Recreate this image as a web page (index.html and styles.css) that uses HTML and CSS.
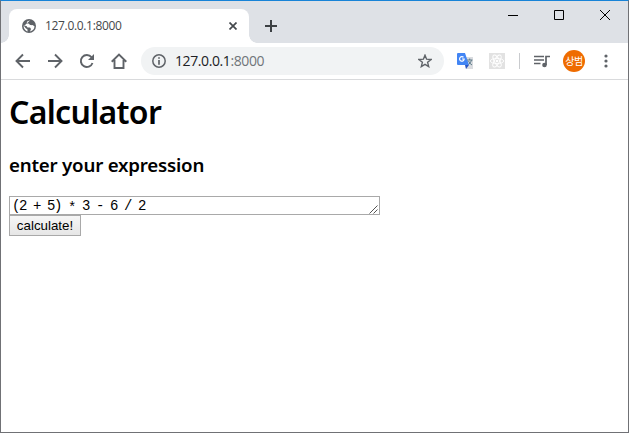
FILE: index.html
```html
<!DOCTYPE html>
<html lang="ko">
<head>
<meta charset="utf-8">
<title>127.0.0.1:8000</title>
<link rel="stylesheet" href="styles.css">
</head>
<body>
<div class="window">
  <header class="tabstrip">
    <div class="tab">
      <svg class="globe" width="14" height="14" viewBox="0 0 14 14"><circle cx="7" cy="7" r="7" fill="#5f6368"/><path d="M8 1.500C5 2 4.500 3 5 4.200L7 4.700 8 6l2-.2 2.500 1.500C12.500 10 10.500 12 8 12.500L9 10 8 8.500H5.500L4.500 7 1.700 6.500C1.300 9.800 4 12 5.500 12.400V10.500L3.500 9 2 7" fill="#fff"/><path d="M8 2.500 11 3l1 2.500-2.500.8L8 5z" fill="#5f6368"/></svg>
      <span class="tab-title">127.0.0.1:8000</span>
      <svg class="tab-close" width="8" height="8" viewBox="0 0 8 8"><path d="M.5.5l7 7M7.500.5l-7 7" stroke="#45494d" stroke-width="1.700"/></svg>
    </div>
    <svg class="new-tab" width="12" height="12" viewBox="0 0 12 12"><path d="M6 0v12M0 6h12" stroke="#3c4043" stroke-width="2"/></svg>
    <div class="controls">
      <svg width="10" height="10" viewBox="0 0 10 10"><path d="M0 5.500h10" stroke="#000"/></svg>
      <svg width="10" height="10" viewBox="0 0 10 10"><path d="M.5.5h9v9h-9z" stroke="#000" fill="none"/></svg>
      <svg width="10" height="10" viewBox="0 0 10 10"><path d="M0 0l10 10M10 0L0 10" stroke="#000"/></svg>
    </div>
  </header>
  <nav class="toolbar">
    <div class="nav-icons">
      <svg width="16" height="16" viewBox="0 0 16 16"><path d="M15 8H2M8 1.500L1.500 8 8 14.500"/></svg>
      <svg width="16" height="16" viewBox="0 0 16 16"><path d="M1 8h13M8 1.500L14.500 8 8 14.500"/></svg>
      <svg width="16" height="16" viewBox="0 0 16 16"><path d="M13.500 10A6 6 0 1 1 12.500 4.200"/><path class="solid" d="M15 1v6H9z"/></svg>
      <svg width="16" height="16" viewBox="0 0 16 16"><path d="M.7 8.700L8 1.500l7.300 7.200M3.500 7v8h9V7"/></svg>
    </div>
    <div class="omnibox">
      <svg width="14" height="14" viewBox="0 0 14 14"><circle cx="7" cy="7" r="6.200" fill="none" stroke="#5f6368" stroke-width="1.500"/><path d="M7 3.200v1.600M7 6v4.800" stroke="#5f6368" stroke-width="1.700"/></svg>
      <span class="url">127.0.0.1<span class="port">:8000</span></span>
      <svg class="star" width="14" height="14" viewBox="0 0 14 14"><path d="M7 1.200l1.600 4 4.500.3-3.500 2.800 1.100 4.300L7 10.300l-3.700 2.300 1.100-4.300L.9 5.500l4.500-.3z" fill="none" stroke="#5f6368" stroke-width="1.400"/></svg>
    </div>
    <svg class="translate" width="16" height="16" viewBox="0 0 16 16"><path d="M7 4h9v12H9z" fill="#dadce0"/><path d="M0 1q0-1 1-1h7l4 12H1q-1 0-1-1z" fill="#4285f4"/><path d="M8 12h4l-3 4z" fill="#2855c5"/><path d="M6.500 4.200A2.300 2.300 0 1 0 7.200 6H5" stroke="#fff" stroke-width="1.200" fill="none"/><path d="M10 7h5.500M12.700 5.500V7M14.500 7q-.5 3-3 4.500M11.500 8q1 2.500 3.500 4" stroke="#607d8b" fill="none"/></svg>
    <svg class="react" width="16" height="16" viewBox="0 0 16 16"><path d="M0 0h16v16H0z" fill="#e2e2e2"/><g fill="none" stroke="#fff" stroke-width=".9"><ellipse cx="8" cy="8" rx="6.700" ry="2.600"/><ellipse cx="8" cy="8" rx="6.700" ry="2.600" transform="rotate(60 8 8)"/><ellipse cx="8" cy="8" rx="6.700" ry="2.600" transform="rotate(120 8 8)"/></g><circle cx="8" cy="8" r="1.300" fill="#fff"/></svg>
    <span class="divider"></span>
    <svg class="media" width="16" height="13" viewBox="0 0 16 13"><path d="M0 1.500h10M0 5h10M0 8.500h6.500M12 10V1.500h4" fill="none" stroke="#5f6368" stroke-width="1.700"/><circle cx="10.500" cy="10" r="2.300" fill="#5f6368"/></svg>
    <span class="avatar">상범</span>
    <svg class="more" width="4" height="14" viewBox="0 0 4 14"><g fill="#5f6368"><circle cx="2" cy="2" r="1.600"/><circle cx="2" cy="7" r="1.600"/><circle cx="2" cy="12" r="1.600"/></g></svg>
  </nav>
  <main>
    <h1>Calculator</h1>
    <h3>enter your expression</h3>
    <div class="field"><span class="expression">(2 + 5) <span class="operator">*</span> 3 - 6 / 2</span><svg class="grip" width="9" height="9" viewBox="0 0 9 9"><path d="M.5 8.500l8-8M4.500 8.500l4-4" stroke="#555"/></svg></div>
    <button type="button">calculate!</button>
  </main>
</div>
</body>
</html>
```
FILE: styles.css
```css
* { box-sizing: border-box; }
body { margin: 0; overflow: hidden; background: #fff; color: #000; }
svg { display: block; flex: none; }
.window {
  width: 629px; height: 433px;
  border: 1px solid #707175; border-top-color: #1883d7;
  font-family: "Noto Sans", "Noto Sans CJK KR", sans-serif;
}
.tabstrip { display: flex; height: 42px; padding: 8px 0 0 8px; background: #dee1e6; }
.tab {
  position: relative; display: flex; align-items: center;
  width: 240px; height: 34px; padding: 0 12px 0 13px;
  background: #fff; border-radius: 8px 8px 0 0;
}
.tab::before, .tab::after { content: ""; position: absolute; bottom: 0; width: 8px; height: 8px; }
.tab::before { left: -8px; background: radial-gradient(circle at 0 0, transparent 7.5px, #fff 8px); }
.tab::after { right: -8px; background: radial-gradient(circle at 100% 0, transparent 7.5px, #fff 8px); }
.tab-title { margin-left: 9px; font: 12px/16px "Open Sans", sans-serif; letter-spacing: -.33px; color: #45474a; white-space: nowrap; }
.tab-close { margin-left: auto; }
.new-tab { margin: 11px 0 0 16px; }
.controls { display: flex; gap: 36px; margin: 1px 18px 0 auto; }
.toolbar { display: flex; align-items: center; height: 37px; border-bottom: 1px solid #d9dadc; }
.nav-icons { display: flex; gap: 16px; margin-left: 14px; }
.nav-icons path { fill: none; stroke: #5f6368; stroke-width: 1.9; }
.nav-icons .solid { fill: #5f6368; stroke: none; }
.omnibox { display: flex; align-items: center; width: 303px; height: 28px; margin-left: 14px; padding: 0 12px 0 11px; background: #f1f3f4; border-radius: 14px; }
.url { margin-left: 9px; font: 14px/18px "Open Sans", sans-serif; letter-spacing: -.4px; color: #202124; white-space: nowrap; }
.port { color: #70757a; }
.star { margin-left: auto; }
.translate { margin-left: 13px; }
.react { margin-left: 16px; }
.divider { width: 1px; height: 16px; margin-left: 14px; background: #c9cbce; }
.media { margin-left: 14px; }
.avatar { width: 22px; height: 22px; margin-left: 13px; border-radius: 50%; background: #ef6c00; color: #fff; font: 10px/21px "Noto Sans CJK KR", sans-serif; text-align: center; letter-spacing: -.5px; white-space: nowrap; }
.more { margin-left: 19px; }
main { padding: 10px 8px 0; }
h1 { margin: 0; font-size: 32px; line-height: 43px; font-weight: 600; letter-spacing: -.7px; }
h3 { margin: 19px 0 19px; font-size: 18.72px; line-height: 25px; font-weight: 600; letter-spacing: -.22px; }
.field { display: flex; width: 371px; height: 19px; padding: 1px 0 0 2px; border: 1px solid #a9a9a9; }
.expression { font: 14px/17px "Liberation Mono", monospace; letter-spacing: -1.4px; white-space: pre; }
.operator { position: relative; top: 2px; }
.grip { margin: 7px 1px 0 auto; }
button { display: block; width: 72px; height: 21px; margin: 0; padding: 0; border: 1px solid #a9a9a9; border-radius: 0; background: linear-gradient(#f6f6f6, #e6e6e6); color: #000; font: 13.33px/18px "Liberation Sans", sans-serif; }
```
